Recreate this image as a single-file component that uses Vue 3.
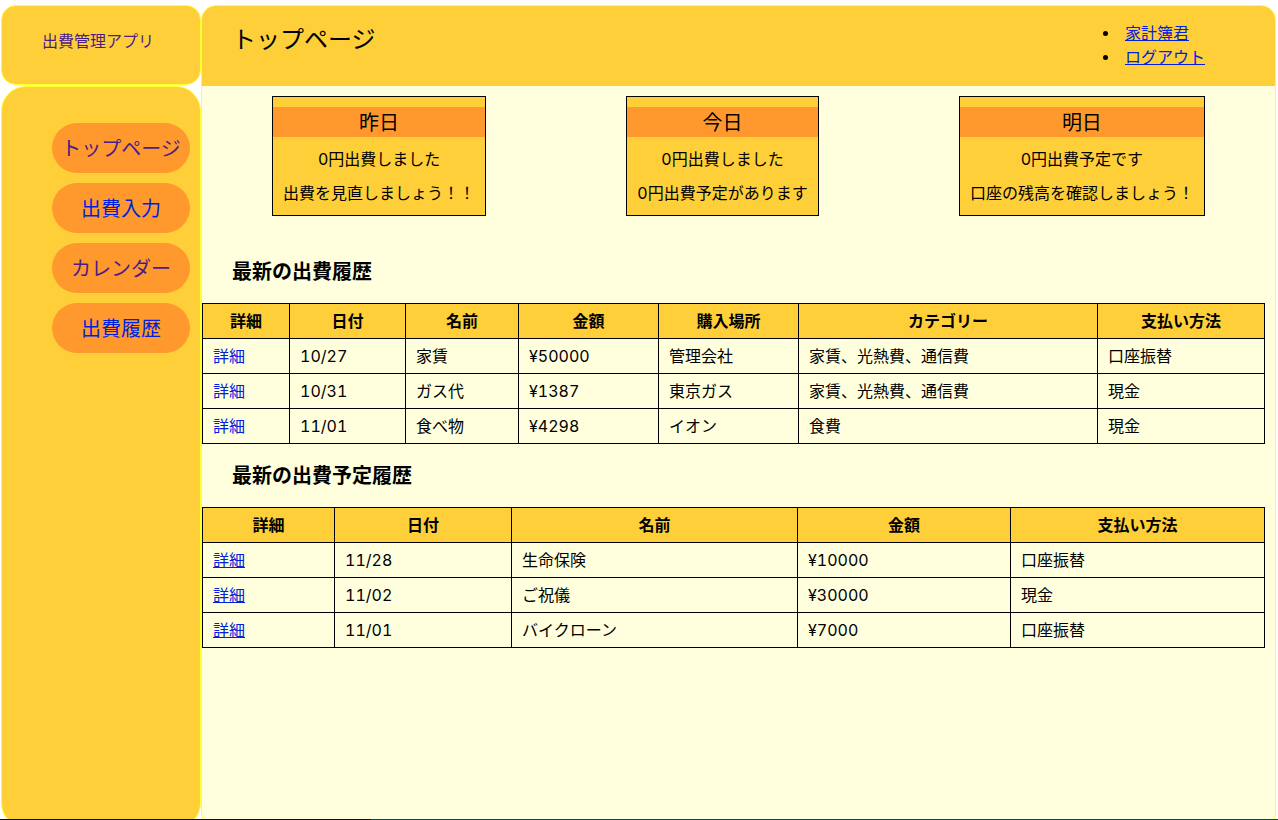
<script setup>
const navItems = [
  { label: 'トップページ', visited: true },
  { label: '出費入力', visited: false },
  { label: 'カレンダー', visited: true },
  { label: '出費履歴', visited: false }
]

const cards = [
  { day: '昨日', lines: ['0円出費しました', '出費を見直しましょう！！'] },
  { day: '今日', lines: ['0円出費しました', '0円出費予定があります'] },
  { day: '明日', lines: ['0円出費予定です', '口座の残高を確認しましょう！'] }
]

const tables = [
  {
    id: 'history',
    title: '最新の出費履歴',
    underlined: false,
    columns: [
      { label: '詳細', size: 87 },
      { label: '日付', size: 116 },
      { label: '名前', size: 113 },
      { label: '金額', size: 140 },
      { label: '購入場所', size: 140 },
      { label: 'カテゴリー', size: 299 },
      { label: '支払い方法', size: 167 }
    ],
    rows: [
      ['10/27', '家賃', '¥50000', '管理会社', '家賃、光熱費、通信費', '口座振替'],
      ['10/31', 'ガス代', '¥1387', '東京ガス', '家賃、光熱費、通信費', '現金'],
      ['11/01', '食べ物', '¥4298', 'イオン', '食費', '現金']
    ]
  },
  {
    id: 'plans',
    title: '最新の出費予定履歴',
    underlined: true,
    columns: [
      { label: '詳細', size: 132 },
      { label: '日付', size: 177 },
      { label: '名前', size: 286 },
      { label: '金額', size: 213 },
      { label: '支払い方法', size: 254 }
    ],
    rows: [
      ['11/28', '生命保険', '¥10000', '口座振替'],
      ['11/02', 'ご祝儀', '¥30000', '現金'],
      ['11/01', 'バイクローン', '¥7000', '口座振替']
    ]
  }
]

function share(table, column) {
  const total = table.columns.reduce((sum, c) => sum + c.size, 0)
  return (column.size / total) * 100 + '%'
}
</script>

<template>
  <div class="page">
    <aside class="side">
      <div class="logo"><a href="#" class="visited">出費管理アプリ</a></div>
      <nav class="menu">
        <a
          v-for="item in navItems"
          :key="item.label"
          href="#"
          class="pill"
          :class="{ visited: item.visited }"
        >{{ item.label }}</a>
      </nav>
    </aside>

    <main class="main">
      <header class="header">
        <h1>トップページ</h1>
        <ul class="account">
          <li><a href="#">家計簿君</a></li>
          <li><a href="#">ログアウト</a></li>
        </ul>
      </header>

      <div class="cards">
        <section v-for="card in cards" :key="card.day" class="card">
          <h2>{{ card.day }}</h2>
          <p v-for="line in card.lines" :key="line">{{ line }}</p>
        </section>
      </div>

      <section v-for="table in tables" :key="table.id" class="records">
        <h3 :id="table.id">{{ table.title }}</h3>
        <table :aria-labelledby="table.id">
          <colgroup>
            <col v-for="c in table.columns" :key="c.label" :style="{ width: share(table, c) }">
          </colgroup>
          <thead>
            <tr>
              <th v-for="c in table.columns" :key="c.label" scope="col">{{ c.label }}</th>
            </tr>
          </thead>
          <tbody>
            <tr v-for="row in table.rows" :key="row[0]">
              <td><a href="#" :class="{ plain: !table.underlined }">詳細</a></td>
              <td v-for="(cell, i) in row" :key="i">{{ cell }}</td>
            </tr>
          </tbody>
        </table>
      </section>
    </main>
    <div class="edge"></div>
  </div>
</template>

<style>
body {
  background: #fff;
}
</style>

<style scoped>
.page {
  position: relative;
  display: flex;
  box-sizing: border-box;
  height: 100vh;
  padding: 5px 2px 0 1px;
  overflow: hidden;
  color: #000;
  font-family: Inter, "Noto Sans CJK JP", sans-serif;
  font-variant-numeric: tabular-nums;
  font-size: 16px;
  line-height: 24px;
}

a {
  color: #0021de;
}

a.visited {
  color: #4c1d86;
}

.side {
  display: flex;
  flex: 0 0 200px;
  flex-direction: column;
  gap: 1px;
}

.logo {
  box-sizing: border-box;
  height: 80px;
  padding: 23px 40px;
  border: 1px solid #ffff33;
  border-radius: 15px;
  background: #ffcf39;
}

.logo a {
  text-decoration: none;
}

.menu {
  display: flex;
  flex: 1;
  flex-direction: column;
  gap: 10px;
  margin-bottom: -8px;
  padding: 36px 10px 0 50px;
  border: 1px solid #ffff33;
  border-radius: 25px;
  background: #ffcf39;
}

.pill {
  padding-top: 2px;
  border-radius: 25px;
  background: #ff992d;
  font-size: 20px;
  line-height: 48px;
  text-align: center;
  text-decoration: none;
}

.main {
  flex: 1;
  min-width: 0;
  margin-bottom: -8px;
  border: 1px solid #ffff33;
  border-radius: 15px;
  background: #ffffde;
  overflow: hidden;
}

.header {
  display: flex;
  justify-content: space-between;
  box-sizing: border-box;
  height: 80px;
  padding: 15px 70px 0 30px;
  background: #ffcf39;
}

h1 {
  margin: 0;
  font-size: 24px;
  font-weight: 400;
  line-height: 38px;
}

.account {
  margin: 0;
  padding: 0;
  list-style: none;
}

.account li {
  display: flex;
  align-items: center;
  gap: 17px;
}

.account li::before {
  width: 5px;
  height: 5px;
  border-radius: 50%;
  background: #000;
  content: "";
}

.cards {
  display: flex;
  justify-content: space-around;
  padding: 10px 0 24px;
}

.card {
  display: flex;
  flex-direction: column;
  gap: 10px;
  padding: 10px 0;
  border: 1px solid #000;
  background: #ffcf39;
  text-align: center;
}

.card h2 {
  margin: 0;
  padding-top: 2px;
  background: #ff992d;
  font-size: 20px;
  font-weight: 400;
  line-height: 28px;
}

.card p {
  margin: 0;
  padding: 0 10px;
}

h3 {
  margin: 0;
  padding: 17px 30px 15px;
  font-size: 20px;
  line-height: 31px;
}

table {
  width: calc(100% - 10px);
  border-collapse: collapse;
  table-layout: fixed;
}

th,
td {
  padding: 5px 10px;
  border: 1px solid #000;
}

th {
  background: #ffcf39;
}

td {
  text-align: left;
}

.plain {
  text-decoration: none;
}

.edge {
  position: absolute;
  right: 0;
  bottom: 0;
  left: 0;
  height: 1px;
  background: linear-gradient(to right, #101014 29%, #0b4568 29%);
}
</style>
